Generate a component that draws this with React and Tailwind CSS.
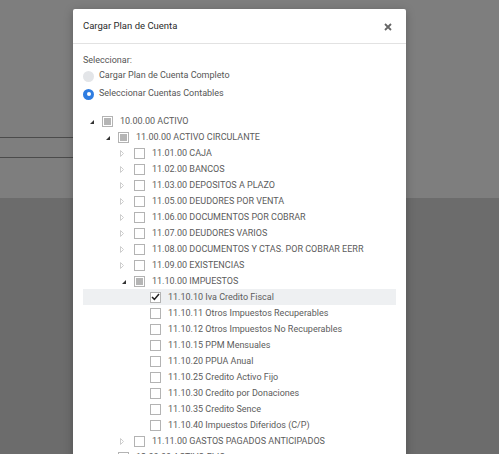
import React from 'react';

const tree = [
  { level: 0, code: '10.00.00 ACTIVO', toggle: 'open', state: 'partial' },
  { level: 1, code: '11.00.00 ACTIVO CIRCULANTE', toggle: 'open', state: 'partial' },
  { level: 2, code: '11.01.00 CAJA', toggle: 'closed' },
  { level: 2, code: '11.02.00 BANCOS', toggle: 'closed' },
  { level: 2, code: '11.03.00 DEPOSITOS A PLAZO', toggle: 'closed' },
  { level: 2, code: '11.05.00 DEUDORES POR VENTA', toggle: 'closed' },
  { level: 2, code: '11.06.00 DOCUMENTOS POR COBRAR', toggle: 'closed' },
  { level: 2, code: '11.07.00 DEUDORES VARIOS', toggle: 'closed' },
  { level: 2, code: '11.08.00 DOCUMENTOS Y CTAS. POR COBRAR EERR', toggle: 'closed' },
  { level: 2, code: '11.09.00 EXISTENCIAS', toggle: 'closed' },
  { level: 2, code: '11.10.00 IMPUESTOS', toggle: 'open', state: 'partial' },
  { level: 3, code: '11.10.10 Iva Credito Fiscal', state: 'checked', active: true },
  { level: 3, code: '11.10.11 Otros Impuestos Recuperables' },
  { level: 3, code: '11.10.12 Otros Impuestos No Recuperables' },
  { level: 3, code: '11.10.15 PPM Mensuales' },
  { level: 3, code: '11.10.20 PPUA Anual' },
  { level: 3, code: '11.10.25 Credito Activo Fijo' },
  { level: 3, code: '11.10.30 Credito por Donaciones' },
  { level: 3, code: '11.10.35 Credito Sence' },
  { level: 3, code: '11.10.40 Impuestos Diferidos (C/P)' },
  { level: 2, code: '11.11.00 GASTOS PAGADOS ANTICIPADOS', toggle: 'closed' },
  { level: 1, code: '12.00.00 ACTIVO FIJO', toggle: 'closed' },
];

const indent = ['pl-0', 'pl-4', 'pl-8', 'pl-12'];

const Toggle = ({ type }) => {
  if (type === 'open') {
    return (
      <span className="w-[19px] pl-[7px] flex items-center">
        <svg width="4" height="4" viewBox="0 0 4 4" className="mt-[1px]">
          <polygon points="4,0 4,4 0,4" fill="#333" />
        </svg>
      </span>
    );
  }
  if (type === 'closed') {
    return (
      <span className="w-[19px] pl-[5px] flex items-center">
        <svg width="4" height="7" viewBox="0 0 4 7">
          <polygon points="0.5,0.5 3.5,3.5 0.5,6.5" fill="none" stroke="#c8c8c8" strokeWidth="0.9" />
        </svg>
      </span>
    );
  }
  return <span className="w-[19px]" />;
};

const Checkbox = ({ state }) => (
  <span className="w-[11px] h-[11px] border border-[#b3b3b3] bg-white flex items-center justify-center shrink-0">
    {state === 'partial' && <span className="w-[7px] h-[7px] bg-[#b5b5b5]" />}
    {state === 'checked' && (
      <svg width="9" height="8" viewBox="0 0 9 8">
        <path d="M1 4 L3.4 6.4 L8 1" fill="none" stroke="#222" strokeWidth="1.5" />
      </svg>
    )}
  </span>
);

const App = () => {
  return (
    <div className="relative w-[499px] h-[454px] overflow-hidden bg-[#7e7e7e] font-['Roboto',sans-serif]">
      {/* page behind the overlay */}
      <div className="flex flex-col">
        <div className="h-[137px]" />
        <div className="w-[380px] h-[21px] border-t border-b border-[#4b4b4b]" />
        <div className="h-[40px]" />
        <div className="h-[260px] bg-[#6c6c6c]" />
      </div>

      {/* modal */}
      <div className="absolute left-[73px] top-[9px] w-[333px] h-[460px] bg-white rounded-[2px] shadow-[0_2px_10px_rgba(0,0,0,0.25)]">
        <div className="h-[35px] border-b border-[#e2e2e2] flex items-center justify-between pl-[10px] pr-[14px]">
          <span className="text-[9.5px] text-[#2b2b2b] pt-[1px]">Cargar Plan de Cuenta</span>
          <svg width="8" height="8" viewBox="0 0 8 8" className="mt-[2px]">
            <path d="M1 1 L7 7 M7 1 L1 7" stroke="#666" strokeWidth="1.8" />
          </svg>
        </div>

        <div className="pl-[10px] pr-[10px] pt-[9px] text-[9px] text-[#555]">
          <div className="leading-[14px]">Seleccionar:</div>
          <div className="flex items-center gap-[5px] mt-[1px] h-[16px]">
            <span className="w-[11px] h-[11px] rounded-full bg-[#e3e5e8]" />
            <span>Cargar Plan de Cuenta Completo</span>
          </div>
          <div className="flex items-center gap-[5px] mt-[2px] h-[16px]">
            <span className="w-[11px] h-[11px] rounded-full bg-[#2f7de1] flex items-center justify-center">
              <span className="w-[4px] h-[4px] rounded-full bg-white" />
            </span>
            <span>Seleccionar Cuentas Contables</span>
          </div>

          <div className="mt-[11px] text-[#5c5c5c]">
            {tree.map((row, i) => (
              <div
                key={i}
                className={`h-[16px] flex items-center ${row.active ? 'bg-[#eef0f2]' : ''}`}
              >
                <div className={`flex items-center ${indent[row.level]}`}>
                  <Toggle type={row.toggle} />
                  <Checkbox state={row.state} />
                  <span className="ml-[7px] whitespace-nowrap leading-[16px]">{row.code}</span>
                </div>
              </div>
            ))}
          </div>
        </div>
      </div>
    </div>
  );
};

export default App;
